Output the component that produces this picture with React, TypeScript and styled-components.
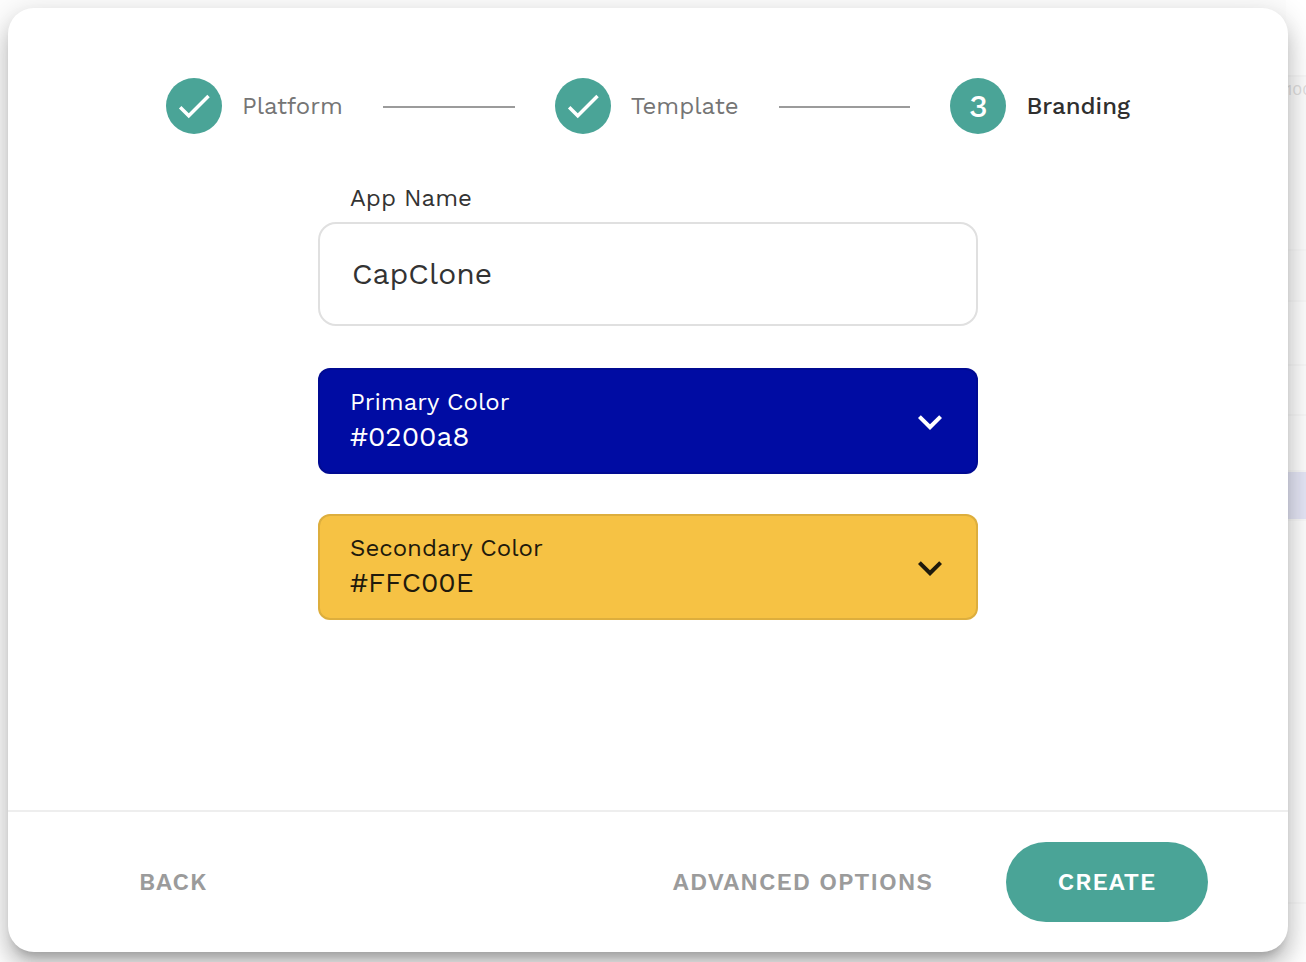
import React, { useState } from "react";
import styled, { createGlobalStyle } from "styled-components";

const GlobalStyle = createGlobalStyle`
  *, *::before, *::after { box-sizing: border-box; }
  body {
    margin: 0;
    background: #fdfdfd;
    color: #333;
    font-family: "Work Sans", Inter, "Liberation Sans", sans-serif;
  }
  button, input, select { font: inherit; color: inherit; }
`;

const TEAL = "#4aa497";

const Page = styled.div`
  display: grid;
  min-height: 100vh;
  overflow: hidden;
`;

const Backdrop = styled.div`
  grid-area: 1 / 1;
  justify-self: end;
  width: 20px;
  overflow: hidden;
  color: #dedede;
  font-size: 16px;
  line-height: 26px;
`;

const BackdropRow = styled.div<{ $height: number; $fill: string }>`
  height: ${(p) => p.$height}px;
  border-bottom: 2px solid #f8f8f8;
  background: ${(p) => p.$fill};
`;

const Dialog = styled.main`
  grid-area: 1 / 1;
  z-index: 1;
  display: flex;
  flex-direction: column;
  margin: 8px 18px 10px 8px;
  border-radius: 26px;
  background: #fff;
  box-shadow:
    0 10px 10px -6px rgba(0, 0, 0, 0.2),
    0 16px 20px 2px rgba(0, 0, 0, 0.14),
    0 6px 28px 4px rgba(0, 0, 0, 0.12);
`;

const Content = styled.div`
  flex: 1;
  padding: 70px 24px 24px;
`;

const Stepper = styled.ol`
  display: flex;
  align-items: center;
  gap: 40px;
  max-width: 964px;
  margin: 0 auto;
  padding: 0;
  list-style: none;
`;

const Step = styled.li<{ $current?: boolean }>`
  display: flex;
  align-items: center;
  gap: 20px;
  color: ${(p) => (p.$current ? "#2f2f2f" : "#757575")};
  font-size: 24px;
  font-weight: ${(p) => (p.$current ? 500 : 400)};
  line-height: 28px;
`;

const StepMark = styled.span`
  display: grid;
  place-items: center;
  width: 56px;
  height: 56px;
  border-radius: 50%;
  background: ${TEAL};
  color: #fff;
  font-size: 32px;
  font-weight: 500;
`;

const Connector = styled.li`
  flex: 1;
  height: 2px;
  margin-top: 2px;
  background: #9b9b9b;
`;

const Form = styled.form`
  display: flex;
  flex-direction: column;
  gap: 40px;
  max-width: 660px;
  margin: 50px auto 0;
`;

const NameField = styled.div`
  display: flex;
  flex-direction: column;
  gap: 10px;
  padding-bottom: 2px;
`;

const FieldLabel = styled.label`
  padding: 0 32px;
  font-size: 24px;
  line-height: 28px;
`;

const TextInput = styled.input`
  width: 100%;
  height: 104px;
  padding: 0 32px 2px;
  border: 2px solid #e0e0e0;
  border-radius: 18px;
  outline: none;
  background: #fff;
  font-size: 30px;
`;

const ColorField = styled.div<{ $fill: string; $ink: string }>`
  display: grid;
  align-items: center;
  border-radius: 12px;
  background: ${(p) => p.$fill};
  color: ${(p) => p.$ink};

  > * { grid-area: 1 / 1; }
`;

const ColorLabel = styled(FieldLabel)`
  align-self: start;
  padding-top: 20px;
  pointer-events: none;
`;

const ColorSelect = styled.select`
  width: 100%;
  height: 106px;
  padding: 30px 80px 0 30px;
  border: 2px solid rgba(0, 0, 0, 0.1);
  border-radius: 12px;
  outline: none;
  appearance: none;
  background: transparent;
  font-size: 28px;
`;

const Chevron = styled.svg`
  justify-self: end;
  width: 48px;
  height: 48px;
  margin-top: 2px;
  margin-right: 24px;
  fill: currentColor;
  pointer-events: none;
`;

const Footer = styled.footer`
  display: flex;
  align-items: center;
  justify-content: space-between;
  padding: 30px 80px;
  border-top: 2px solid #eee;
`;

const Actions = styled.div`
  display: flex;
  align-items: center;
  gap: 22px;
`;

const TextButton = styled.button`
  height: 80px;
  padding: 0 51px;
  border: 0;
  border-radius: 40px;
  background: transparent;
  color: #9b9b9b;
  font-size: 24px;
  font-weight: 600;
  letter-spacing: 1px;
  text-transform: uppercase;
`;

const PrimaryButton = styled(TextButton)`
  min-width: 202px;
  background: ${TEAL};
  color: #fff;
`;

const Tick = () => (
  <svg width="42" height="42" viewBox="0 0 24 24" fill="currentColor" role="img" aria-label="Done">
    <path d="M9 16.2L4.8 12l-1.4 1.4L9 19 21 7l-1.4-1.4L9 16.2z" />
  </svg>
);

type PickerProps = { id: string; label: string; options: string[]; fill: string; ink: string };

const ColorPicker = ({ id, label, options, fill, ink }: PickerProps) => (
  <ColorField $fill={fill} $ink={ink}>
    <ColorSelect id={id} defaultValue={options[0]}>
      {options.map((o) => (
        <option key={o}>{o}</option>
      ))}
    </ColorSelect>
    <ColorLabel htmlFor={id}>{label}</ColorLabel>
    <Chevron viewBox="0 0 24 24" aria-hidden="true">
      <path d="M16.59 8.59L12 13.17 7.41 8.59 6 10l6 6 6-6z" />
    </Chevron>
  </ColorField>
);

export default function App() {
  const [name, setName] = useState("CapClone");

  return (
    <>
      <GlobalStyle />
      <Page>
        <Backdrop aria-hidden="true">
          <BackdropRow $height={77} $fill="#fff" />
          <BackdropRow $height={174} $fill="#fcfcfc">100</BackdropRow>
          <BackdropRow $height={51} $fill="#fbfbfb" />
          <BackdropRow $height={64} $fill="#fdfdfd" />
          <BackdropRow $height={50} $fill="#fdfdfd" />
          <BackdropRow $height={56} $fill="#fdfdfd" />
          <BackdropRow $height={49} $fill="#e4e5f5" />
          <BackdropRow $height={383} $fill="#fdfdfd" />
        </Backdrop>
        <Dialog>
          <Content>
            <Stepper>
              <Step>
                <StepMark><Tick /></StepMark>
                Platform
              </Step>
              <Connector aria-hidden="true" />
              <Step>
                <StepMark><Tick /></StepMark>
                Template
              </Step>
              <Connector aria-hidden="true" />
              <Step $current aria-current="step">
                <StepMark>3</StepMark>
                Branding
              </Step>
            </Stepper>
            <Form id="branding" onSubmit={(e) => e.preventDefault()}>
              <NameField>
                <FieldLabel htmlFor="app-name">App Name</FieldLabel>
                <TextInput id="app-name" value={name} onChange={(e) => setName(e.target.value)} />
              </NameField>
              <ColorPicker id="primary" label="Primary Color" options={["#0200a8"]} fill="#000ca3" ink="#fff" />
              <ColorPicker id="secondary" label="Secondary Color" options={["#FFC00E"]} fill="#f6c244" ink="#1f1a0c" />
            </Form>
          </Content>
          <Footer>
            <TextButton type="button">Back</TextButton>
            <Actions>
              <TextButton type="button">Advanced options</TextButton>
              <PrimaryButton type="submit" form="branding">Create</PrimaryButton>
            </Actions>
          </Footer>
        </Dialog>
      </Page>
    </>
  );
}
